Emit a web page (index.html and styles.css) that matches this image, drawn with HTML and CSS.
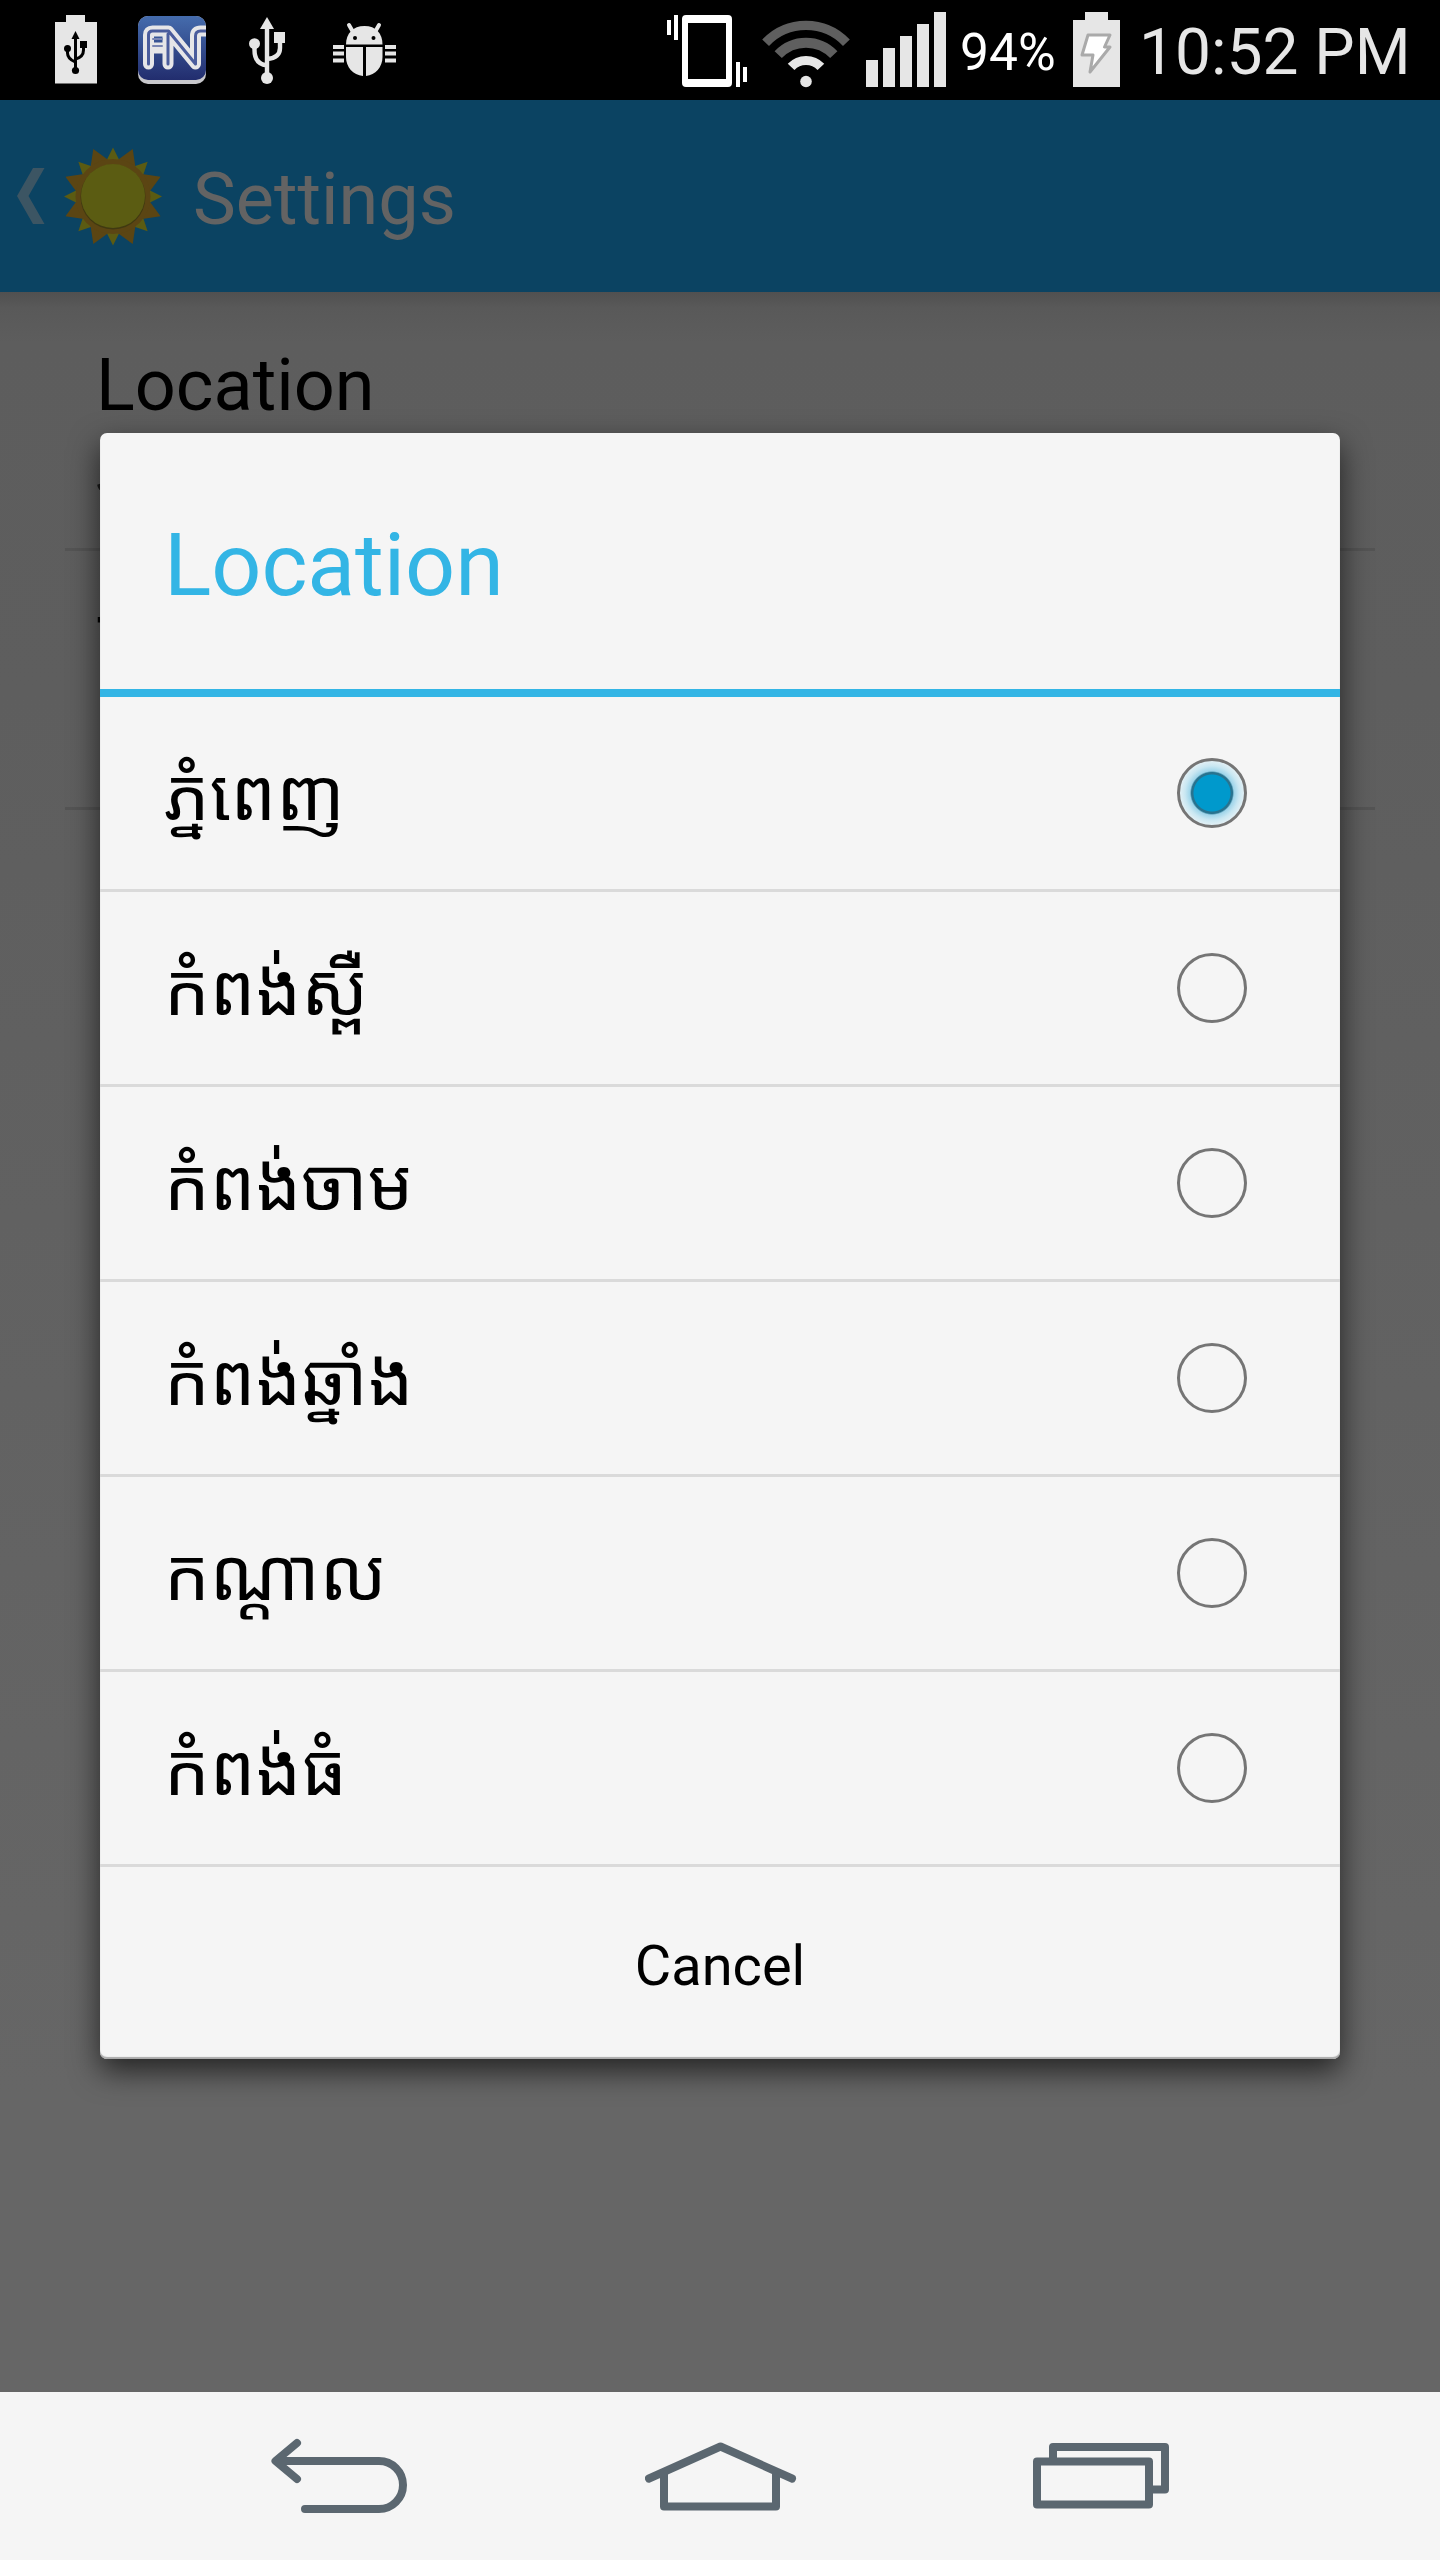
FILE: index.html
```html
<!DOCTYPE html>
<html lang="km">
<head>
<meta charset="utf-8">
<title>Settings</title>
<link rel="stylesheet" href="styles.css">
</head>
<body>
<div class="screen">
  <header class="status">
    <div class="notices">
      <svg width="42" height="100" viewBox="55 0 42 100">
        <path fill="#e6e6e6" d="M66 15h19v7h12v61.500H55V22h11z"/>
        <g fill="none" stroke="#000" stroke-width="3"><path d="M75.500 38v32M67.500 49v4q0 6 8 9M83.500 46v4q0 7-8 9"/></g>
        <path d="M75.500 31l4 8h-8z"/><circle cx="67.500" cy="48.500" r="3.500"/><path d="M80 41h7v7h-7z"/><circle cx="75.500" cy="70.500" r="3.600"/>
      </svg>
      <svg class="fn" width="68" height="100" viewBox="138 0 68 100">
        <defs>
          <linearGradient id="blue" x1="0" y1="0" x2="0" y2="1"><stop offset="0" stop-color="#466eaf"/><stop offset="1" stop-color="#222d6e"/></linearGradient>
          <clipPath id="tile"><rect x="138" y="16" width="68" height="68" rx="10"/></clipPath>
        </defs>
        <g clip-path="url(#tile)">
          <path fill="#c8c8cc" d="M138 16h68v68h-68z"/>
          <rect x="138" y="14" width="68" height="66" rx="10" fill="url(#blue)"/>
          <g fill="none" stroke-linejoin="round" stroke-linecap="round">
            <path stroke="#e6e6e8" stroke-width="11" d="M148.500 64V35q0-4 4-4h16l27 33V36q0-5 5-5h10M168 64V34M150 48h14"/>
            <path stroke="#4a5c9c" stroke-width="3" d="M148.500 64V35q0-4 4-4h16l27 33V36q0-5 5-5h10M168 64V34"/>
            <path stroke="#7a86b4" stroke-width="2" d="M153 39h9M153 46h9"/>
          </g>
        </g>
      </svg>
      <svg class="usb" width="36" height="100" viewBox="249 0 36 100">
        <g fill="none" stroke="#e6e6e6" stroke-width="4.400"><path d="M267 28v50M254.500 44v6q0 14 12.500 15.500M280 42v6q0 10-13 11"/></g>
        <g fill="#e6e6e6"><path d="M267 17l7 12h-14z"/><circle cx="254.500" cy="43.700" r="5.500"/><path d="M274 32h11v11h-11z"/><circle cx="267" cy="78" r="6"/></g>
      </svg>
      <svg class="bug" width="63" height="100" viewBox="333 0 63 100">
        <g fill="#e6e6e6"><path d="M346 44.500c0-11 7-18.500 18.500-18.500S382.500 33.500 382.500 44.500z"/><path d="M346 47h17v29c-10-1-17-9-17-19zM366 47h16.500v10c0 10-7 18-16.500 19z"/>
        <path d="M333 45h11v4h-11zM333 51.500h11v4h-11zM333 58.500h11v4h-11zM385 45h11v4h-11zM385 51.500h11v4h-11zM385 58.500h11v4h-11z"/></g>
        <path fill="none" stroke="#e6e6e6" stroke-width="4" stroke-linecap="round" d="M349 25l4 7M379 25l-4 7"/>
        <circle cx="355" cy="38" r="2"/><circle cx="373.500" cy="38" r="2"/>
      </svg>
    </div>
    <div class="system">
      <svg width="80" height="100" viewBox="667 0 80 100">
        <g fill="#fff"><path fill-rule="evenodd" d="M686 15h42q4 0 4 4v64q0 4-4 4h-42q-4 0-4-4V19q0-4 4-4zM688 23v56h38V23z"/>
        <path d="M667 20h4v15h-4zM674 15h4v25h-4zM736 62h4v25h-4zM743 67h4v15h-4z"/></g>
      </svg>
      <svg class="wifi" width="88" height="100" viewBox="762 0 88 100">
        <g fill="none"><path stroke="#5f5f5f" stroke-width="9.400" d="M765.600 42.700a55.700 55.700 0 0 1 80.800 0"/><path stroke="#5f5f5f" stroke-width="10" d="M778.200 54.600a38.300 38.300 0 0 1 55.600 0"/><path stroke="#e6e6e6" stroke-width="9.200" d="M791.100 66.900a20.500 20.500 0 0 1 29.800 0"/></g>
        <circle cx="806" cy="81.500" r="5.800" fill="#e6e6e6"/>
      </svg>
      <svg class="signal" width="80" height="100" viewBox="866 0 80 100"><path fill="#e6e6e6" d="M866 60h12v27h-12zM883 48h12v39h-12zM900 36h12v51h-12zM917 24h12v63h-12zM934 12h12v75h-12z"/></svg>
      <span class="percent">94%</span>
      <svg class="battery" width="47" height="100" viewBox="1073 0 47 100"><path fill="#e6e6e6" d="M1085 12h23v8h12v67h-47V20h12z"/><path fill="#fff" stroke="#aaa" stroke-width="3" stroke-linejoin="round" d="M1088 35h22l-5.500 12h5.500l-20 25 3-17h-11z"/></svg>
      <span class="clock">10:52 PM</span>
    </div>
  </header>

  <div class="actionbar">
    <svg width="145" height="192" viewBox="17 100 145 192">
      <path fill="#3c5563" d="M17 196l16-28h11.500l-16 28 16 28H33z"/>
      <g transform="translate(113 196.500)">
        <g fill="#5b5b12">
          <path id="ray" d="M0-49l8 16H-8z"/>
          <use href="#ray" transform="rotate(45)"/><use href="#ray" transform="rotate(90)"/><use href="#ray" transform="rotate(135)"/><use href="#ray" transform="rotate(180)"/><use href="#ray" transform="rotate(225)"/><use href="#ray" transform="rotate(270)"/><use href="#ray" transform="rotate(315)"/>
        </g>
        <g fill="#5b4513">
          <path id="flare" transform="rotate(22.500)" d="M0-51.500L10.500-34h-21z"/>
          <use href="#flare" transform="rotate(45)"/><use href="#flare" transform="rotate(90)"/><use href="#flare" transform="rotate(135)"/><use href="#flare" transform="rotate(180)"/><use href="#flare" transform="rotate(225)"/><use href="#flare" transform="rotate(270)"/><use href="#flare" transform="rotate(315)"/>
          <circle r="37.500"/>
        </g>
        <circle r="32.500" cy=".5" fill="#403911"/><circle r="32" cy="-.5" fill="#5b5c12"/>
      </g>
    </svg>
    <h1>Settings</h1>
  </div>

  <main class="settings">
    <section class="pref"><h2>Location</h2><p>ភ្នំពេញ</p></section>
    <section class="pref"><h2>T</h2></section>

    <div class="dialog">
      <h2 class="dialog-title">Location</h2>
      <ul class="choices">
        <li><span>ភ្នំពេញ</span><i class="radio on"></i></li>
        <li><span>កំពង់ស្ពឺ</span><i class="radio"></i></li>
        <li><span>កំពង់ចាម</span><i class="radio"></i></li>
        <li><span>កំពង់ឆ្នាំង</span><i class="radio"></i></li>
        <li><span>កណ្ដាល</span><i class="radio"></i></li>
        <li><span>កំពង់ធំ</span><i class="radio"></i></li>
      </ul>
      <button class="cancel">Cancel</button>
    </div>
  </main>

  <nav class="navbar">
    <svg width="137" height="168" viewBox="271 2392 137 168"><path d="M297 2443l-21.500 18 21.500 18M277 2461H379a24 24 0 0 1 0 48H305"/></svg>
    <svg width="152" height="168" viewBox="645 2392 152 168"><path d="M649 2478.500l71.500-32L792 2478.500M664 2474v32.500h112v-32.500"/></svg>
    <svg width="136" height="168" viewBox="1033 2392 136 168"><path d="M1037 2461.500h112v43h-112zM1053 2458v-11h112v42.500h-12"/></svg>
  </nav>
</div>
</body>
</html>
```
FILE: styles.css
```css
* { box-sizing: border-box; margin: 0; padding: 0; }
body { font-family: Roboto, "Noto Sans Khmer", "Khmer OS", "Noto Sans", sans-serif; font-weight: 400; }
h1, h2 { font-weight: 400; }
svg { display: block; flex: none; }

.screen { display: flex; flex-direction: column; width: 1440px; height: 2560px; overflow: hidden; }

.status { display: flex; justify-content: space-between; height: 100px; padding: 0 32px 0 55px; background: #000; color: #e6e6e6; }
.notices, .system { display: flex; }
.fn { margin-left: 41px; }
.usb { margin-left: 43px; }
.bug { margin-left: 48px; }
.wifi { margin-left: 15px; }
.signal { margin-left: 16px; }
.percent { width: 113px; margin-left: 14px; padding-top: 1px; font-size: 51.5px; line-height: 103px; color: #fff; white-space: nowrap; }
.clock { width: 288px; padding-left: 19px; font-size: 64px; line-height: 105px; white-space: nowrap; }

.actionbar { display: flex; align-items: center; gap: 31px; height: 192px; padding-left: 17px; background: #0b4362; color: #636363; }
.actionbar h1 { font-size: 72px; line-height: 84px; padding-top: 7px; }

.settings { position: relative; flex: 1; background: linear-gradient(#505050, #595959 16px, #5d5d5d 50px, #5e5e5e 400px, #666 1800px); }
.pref { height: 259px; margin: 0 65px; padding: 52px 31px 0; border-bottom: 3px solid #545454; color: #000; }
.pref h2 { font-size: 72px; line-height: 84px; }
.pref p { padding-top: 9px; font-size: 56px; line-height: 70px; color: #1a1a1a; }

.dialog { position: absolute; left: 100px; top: 141px; width: 1240px; height: 1626px; display: flex; flex-direction: column; border-radius: 7px; background: #f5f5f5; box-shadow: 0 12px 30px rgba(0, 0, 0, .65), inset 0 -2px 1px #aaa; overflow: hidden; }
.dialog-title { height: 264px; padding: 80px 64px 0; border-bottom: 8px solid #33b5e5; color: #33b5e5; font-size: 88px; line-height: 104px; letter-spacing: -.1px; }
.choices { list-style: none; }
.choices li { display: flex; justify-content: space-between; align-items: center; height: 195px; padding: 0 93px 0 64px; border-bottom: 3px solid #dadada; color: #000; font-size: 72px; line-height: 96px; }
.choices span { padding-top: 5px; }
.radio { width: 70px; height: 70px; border: 3px solid #757575; border-radius: 50%; }
.radio.on { background: radial-gradient(circle at center, #0099cc 0 18px, #28738f 19px 20.500px, #9fd5ea 22px, #c9e7f2 27px, #e6f1f5 33px); }
.cancel { flex: 1; padding-top: 6px; border: 0; background: none; color: #000; font: 400 56px/66px Roboto, sans-serif; }

.navbar { display: flex; justify-content: space-between; height: 168px; padding: 0 271px; background: #f5f5f5; }
.navbar path { fill: none; stroke: #5b6770; stroke-width: 8; stroke-linecap: round; stroke-linejoin: round; }
```
